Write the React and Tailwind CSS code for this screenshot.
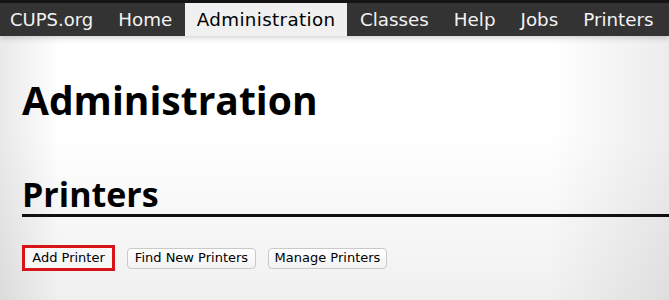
export default function App() {
  const font = { fontFamily: '"DejaVu Sans", "Liberation Sans", sans-serif' };
  const heading = { fontFamily: '"Open Sans", "DejaVu Sans", sans-serif' };
  const nav = ["Home", "Administration", "Classes", "Help", "Jobs", "Printers"];
  return (
    <div
      className="w-[669px] h-[300px] overflow-hidden flex flex-col bg-[linear-gradient(to_right,rgba(0,0,0,0.085),rgba(0,0,0,0)_9%,rgba(0,0,0,0)_82%,rgba(0,0,0,0.075)),linear-gradient(to_bottom,#ffffff_45%,#f0f0f0)]"
      style={font}
    >
      <div className="h-[36px] shrink-0 bg-[#333333] border-t-[3px] border-[#141414] flex items-stretch shadow-[0_2px_6px_rgba(0,0,0,0.18)]">
        <div className="pl-[10px] pr-[12.5px] flex items-center text-[18px] text-[#f2f2f2]">CUPS.org</div>
        {nav.map((n) => (
          <div
            key={n}
            className={
              n === "Administration"
                ? "px-[12px] flex items-center text-[18.3px] tracking-[0.35px] text-black bg-[#f0f0f0]"
                : "px-[12.5px] flex items-center text-[18.3px] text-[#f2f2f2]"
            }
          >
            {n}
          </div>
        ))}
      </div>
      <div className="pl-[22px]">
        <h1 className="mt-[44px] text-[39px] font-bold leading-[39px] text-black" style={heading}>
          Administration
        </h1>
        <h2
          className="mt-[58px] text-[34px] font-bold leading-[34px] text-black border-b-[3px] border-[#111111] pb-[3px]"
          style={heading}
        >
          Printers
        </h2>
        <div className="mt-[28px] flex items-center gap-[12px] text-[13px] text-black">
          <button className="w-[93px] h-[26px] border-[3px] border-[#d8141a] bg-[#f7f7f7] flex items-center justify-center">
            Add Printer
          </button>
          <button className="w-[129px] h-[21px] border border-[#c9c9c9] rounded-[4px] bg-[linear-gradient(to_bottom,#ffffff,#f2f2f2)] flex items-center justify-center">
            Find New Printers
          </button>
          <button className="w-[119px] h-[21px] border border-[#c9c9c9] rounded-[4px] bg-[linear-gradient(to_bottom,#ffffff,#f2f2f2)] flex items-center justify-center">
            Manage Printers
          </button>
        </div>
      </div>
    </div>
  );
}
